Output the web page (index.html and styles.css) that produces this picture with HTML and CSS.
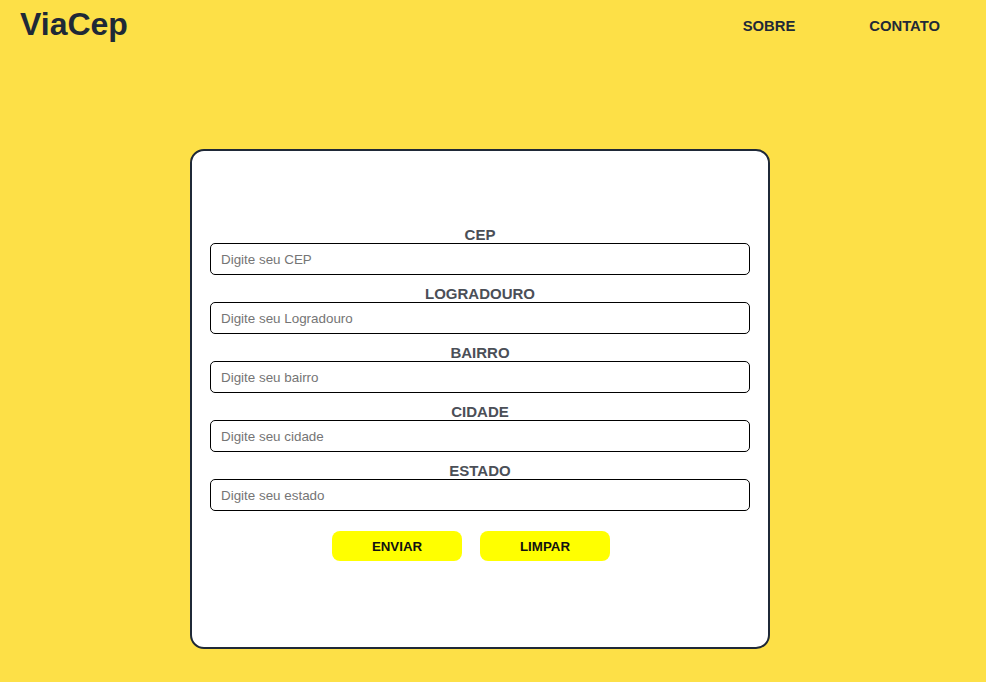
FILE: index.html
```html
<!DOCTYPE html>
<html lang="pt-BR">
<head>
<meta charset="utf-8">
<title>ViaCep</title>
<link rel="stylesheet" href="styles.css">
</head>
<body>
  <header class="topbar">
    <h1 class="logo">ViaCep</h1>
    <nav class="nav">
      <a href="#" class="nav-link">SOBRE</a>
      <a href="#" class="nav-link">CONTATO</a>
    </nav>
  </header>
  <main class="main">
    <form class="card">
      <div class="field">
        <label class="label" for="cep">CEP</label>
        <input class="input" id="cep" type="text" placeholder="Digite seu CEP">
      </div>
      <div class="field">
        <label class="label" for="logradouro">LOGRADOURO</label>
        <input class="input" id="logradouro" type="text" placeholder="Digite seu Logradouro">
      </div>
      <div class="field">
        <label class="label" for="bairro">BAIRRO</label>
        <input class="input" id="bairro" type="text" placeholder="Digite seu bairro">
      </div>
      <div class="field">
        <label class="label" for="cidade">CIDADE</label>
        <input class="input" id="cidade" type="text" placeholder="Digite seu cidade">
      </div>
      <div class="field">
        <label class="label" for="estado">ESTADO</label>
        <input class="input" id="estado" type="text" placeholder="Digite seu estado">
      </div>
      <div class="actions">
        <button type="button" class="btn">ENVIAR</button>
        <button type="reset" class="btn">LIMPAR</button>
      </div>
    </form>
  </main>
</body>
</html>
```
FILE: styles.css
```css
* { box-sizing: border-box; }
html, body {
  margin: 0;
  padding: 0;
  background: #fde047;
  font-family: "Liberation Sans", Arial, sans-serif;
  color: #1f2937;
  height: 100%;
}
.topbar {
  display: flex;
  justify-content: space-between;
  align-items: flex-start;
  padding: 6px 46px 0 20px;
  height: 100px;
}
.logo {
  margin: 0;
  font-size: 32px;
  font-weight: 700;
  line-height: 37px;
  color: #1f2937;
}
.nav {
  display: flex;
  gap: 74px;
  padding-top: 12px;
}
.nav-link {
  font-size: 14.8px;
  font-weight: 700;
  color: #1f2937;
  text-decoration: none;
  line-height: 17px;
}
.main {
  display: flex;
  justify-content: center;
  padding-top: 49px;
  padding-right: 26px;
}
.card {
  width: 580px;
  height: 500px;
  background: #fff;
  border: 2px solid #1f2937;
  border-radius: 14px;
  padding: 75px 18px 0;
  display: flex;
  flex-direction: column;
}
.field {
  display: flex;
  flex-direction: column;
  margin-bottom: 10px;
}
.label {
  text-align: center;
  font-size: 15px;
  font-weight: 700;
  line-height: 17px;
  color: #4b4f57;
}
.input {
  height: 32px;
  width: 100%;
  border: 1px solid #000;
  border-radius: 5px;
  padding: 0 10px;
  font-family: "Liberation Sans", Arial, sans-serif;
  font-size: 13.4px;
  color: #333;
  background: #fff;
  outline: none;
}
.input::placeholder { color: #757575; }
.actions {
  display: flex;
  justify-content: center;
  gap: 18px;
  margin-top: 10px;
  padding-right: 18px;
}
.btn {
  width: 130px;
  height: 30px;
  background: #ffff00;
  border: none;
  border-radius: 8px;
  font-family: "Liberation Sans", Arial, sans-serif;
  font-size: 13.3px;
  font-weight: 700;
  color: #111;
  cursor: pointer;
}
```
